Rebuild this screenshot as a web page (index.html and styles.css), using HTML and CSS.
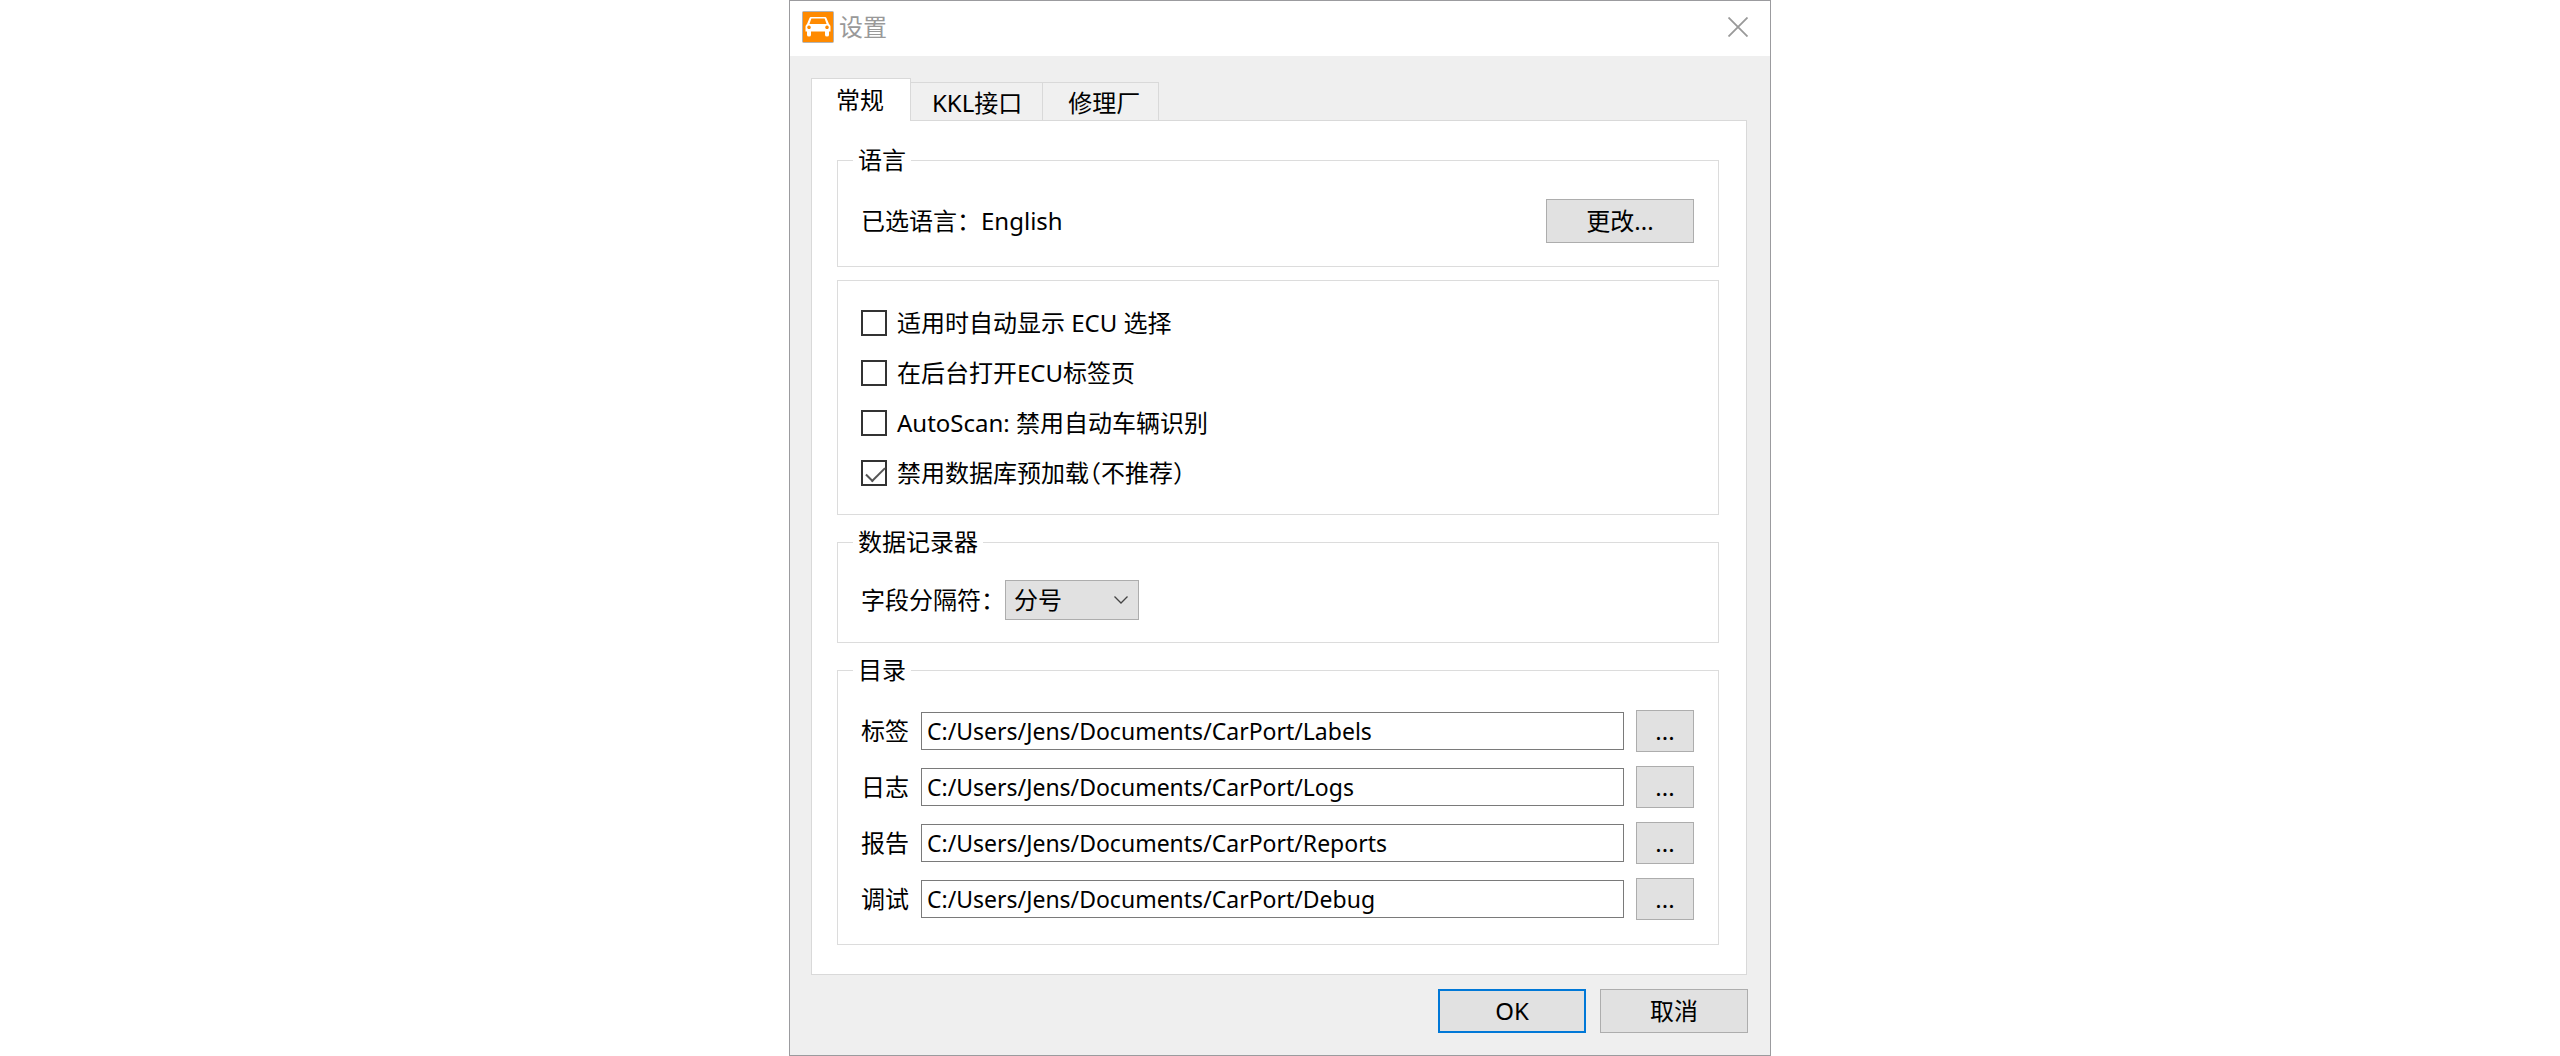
FILE: index.html
```html
<!DOCTYPE html>
<html lang="zh-CN">
<head>
    <meta charset="utf-8">
    <title>设置</title>
    <link rel="stylesheet" href="styles.css">
</head>
<body>
<form class="dialog">
    <header class="titlebar">
        <svg class="logo" viewBox="0 0 32 32" aria-hidden="true">
            <rect x=".5" y=".5" width="31" height="31" rx="1" fill="#ff8a00" stroke="#b4b4b4"/>
            <path fill="#fff" fill-rule="evenodd" d="M9 6h14q1.200 0 1.600 1.200L27 13q1.500 1 1.500 2.500V20.500H27v3.500q0 1.500-2 1.500t-2-1.500V20.500H9v3.500q0 1.500-2 1.500t-2-1.500V20.500H3.500v-5Q3.500 14 5 13l2.400-5.800Q7.800 6 9 6zM9.400 7.500 7.400 13h17.200l-2-5.500zM7 14.500a1.800 1.800 0 1 0 .01 0zM25 14.500a1.800 1.800 0 1 0 .01 0z"/>
        </svg>
        <h1 class="title">设置</h1>
        <button type="button" class="close" aria-label="关闭">
            <svg viewBox="0 0 20 20" width="20" height="20"><path d="M.5.5l19 19M19.500.5l-19 19" stroke="#999" stroke-width="1.800" fill="none"/></svg>
        </button>
    </header>

    <div class="tabs">
        <button type="button" class="tab active">常规</button>
        <button type="button" class="tab">KKL接口</button>
        <button type="button" class="tab">修理厂</button>
    </div>

    <div class="pane">
        <fieldset class="group titled">
            <legend>语言</legend>
            <div class="row spread">
                <span>已选语言：English</span>
                <button type="button" class="btn">更改...</button>
            </div>
        </fieldset>

        <fieldset class="group checks">
            <label class="check"><input type="checkbox">适用时自动显示 ECU 选择</label>
            <label class="check"><input type="checkbox">在后台打开ECU标签页</label>
            <label class="check"><input type="checkbox">AutoScan: 禁用自动车辆识别</label>
            <label class="check"><input type="checkbox" checked>禁用数据库预加载（不推荐）</label>
        </fieldset>

        <fieldset class="group titled logger">
            <legend>数据记录器</legend>
            <div class="row">
                <label for="separator">字段分隔符：</label>
                <div class="combo">
                    <select id="separator"><option>分号</option></select>
                    <svg class="arrow" viewBox="0 0 14 8" width="14" height="8"><path d="M.5.5 7 7 13.500.5" stroke="#444" stroke-width="1.300" fill="none"/></svg>
                </div>
            </div>
        </fieldset>

        <fieldset class="group titled">
            <legend>目录</legend>
            <div class="dirs">
                <label for="labels">标签</label>
                <input type="text" id="labels" value="C:/Users/Jens/Documents/CarPort/Labels">
                <button type="button" class="btn browse">...</button>
                <label for="logs">日志</label>
                <input type="text" id="logs" value="C:/Users/Jens/Documents/CarPort/Logs">
                <button type="button" class="btn browse">...</button>
                <label for="reports">报告</label>
                <input type="text" id="reports" value="C:/Users/Jens/Documents/CarPort/Reports">
                <button type="button" class="btn browse">...</button>
                <label for="debug">调试</label>
                <input type="text" id="debug" value="C:/Users/Jens/Documents/CarPort/Debug">
                <button type="button" class="btn browse">...</button>
            </div>
        </fieldset>
    </div>

    <footer class="actions">
        <button type="button" class="btn default">OK</button>
        <button type="button" class="btn">取消</button>
    </footer>
</form>
</body>
</html>
```
FILE: styles.css
```css
* {
    box-sizing: border-box;
}
body {
    margin: 0;
    background: #fff;
    color: #000;
    font-family: "Noto Sans", "Noto Sans CJK SC", sans-serif;
    font-size: 24px;
    line-height: 28px;
}
button, input, select {
    font: inherit;
    color: inherit;
    margin: 0;
}
.dialog {
    width: 100%;
    max-width: 982px;
    margin: 0 auto;
    border: 1px solid #9b9b9e;
    background: #efefef;
}
.titlebar {
    display: flex;
    align-items: center;
    gap: 5px;
    height: 55px;
    padding: 0 22px 3px 12px;
    background: #fff;
}
.logo {
    width: 32px;
    height: 32px;
}
.title {
    flex: 1;
    margin: 0;
    font-size: 24px;
    font-weight: normal;
    color: #999;
}
.close {
    display: flex;
    padding: 0;
    border: 0;
    background: none;
}

/* tabs */
.tabs {
    display: flex;
    align-items: flex-end;
    padding: 22px 23px 0 21px;
}
.tab {
    height: 38px;
    padding: 2px 20px 0 21px;
    border: 1px solid #d9d9d9;
    border-left: 0;
    border-bottom: 0;
    background: #f0f0f0;
    white-space: nowrap;
}
.tab:last-child {
    padding: 2px 18px 0 25px;
}
.tab.active {
    position: relative;
    height: 43px;
    padding: 0 26px 0 24px;
    margin-bottom: -1px;
    border-left: 1px solid #d9d9d9;
    background: #fff;
}
.pane {
    display: flex;
    flex-direction: column;
    gap: 13px;
    margin: 0 23px 0 21px;
    padding: 25px 27px 29px 25px;
    border: 1px solid #d9d9d9;
    background: #fff;
}

/* group boxes */
.group {
    min-width: 0;
    margin: 0;
    padding: 29px 24px 28px 23px;
    border: 1px solid #dcdcdc;
}
.titled {
    padding: 25px 24px 23px 23px;
}
.logger {
    padding-top: 24px;
    padding-bottom: 22px;
}
legend {
    margin-left: -8px;
    padding: 0 5px;
}
.row {
    display: flex;
    align-items: center;
}
.spread {
    justify-content: space-between;
}
.checks {
    display: flex;
    flex-direction: column;
    gap: 24px;
    font-feature-settings: "halt";
}
.check {
    display: flex;
    align-items: center;
    gap: 10px;
    height: 26px;
}
.check input {
    appearance: none;
    width: 26px;
    height: 26px;
    border: 2px solid #333;
    background: #fff;
}
.check input:checked::after {
    content: "";
    display: block;
    width: 17px;
    height: 8px;
    margin: 5px 0 0 3px;
    border-left: 2px solid #555;
    border-bottom: 2px solid #555;
    transform: rotate(-45deg);
}

/* controls */
.btn {
    width: 148px;
    height: 44px;
    padding: 0;
    border: 1px solid #adadad;
    background: #e1e1e1;
}
.default {
    border: 2px solid #0078d7;
}
.browse {
    width: 58px;
    height: 42px;
}
.combo {
    position: relative;
}
.combo select {
    appearance: none;
    width: 134px;
    height: 40px;
    padding: 0 8px;
    border: 1px solid #adadad;
    border-radius: 0;
    background: #e1e1e1;
}
.arrow {
    position: absolute;
    right: 11px;
    top: 16px;
    pointer-events: none;
}
.dirs {
    display: grid;
    grid-template-columns: auto 1fr auto;
    align-items: center;
    gap: 14px 12px;
    padding: 1px 0;
}
.dirs input {
    min-width: 0;
    height: 38px;
    padding: 0 5px;
    border: 1px solid #7a7a7a;
    background: #fff;
    font-size: 23px;
}
.actions {
    display: flex;
    justify-content: flex-end;
    gap: 14px;
    padding: 14px 22px 22px;
}
```
